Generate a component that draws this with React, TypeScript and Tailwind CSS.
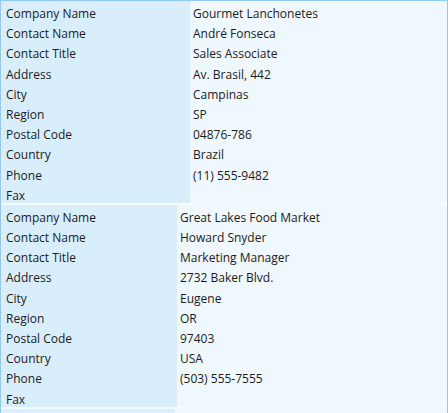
interface Customer {
  labelWidth: string;
  fields: [string, string][];
}

const customers: Customer[] = [
  {
    labelWidth: "grid-cols-[189px_1fr]",
    fields: [
      ["Company Name", "Gourmet Lanchonetes"],
      ["Contact Name", "André Fonseca"],
      ["Contact Title", "Sales Associate"],
      ["Address", "Av. Brasil, 442"],
      ["City", "Campinas"],
      ["Region", "SP"],
      ["Postal Code", "04876-786"],
      ["Country", "Brazil"],
      ["Phone", "(11) 555-9482"],
      ["Fax", ""],
    ],
  },
  {
    labelWidth: "grid-cols-[176px_1fr]",
    fields: [
      ["Company Name", "Great Lakes Food Market"],
      ["Contact Name", "Howard Snyder"],
      ["Contact Title", "Marketing Manager"],
      ["Address", "2732 Baker Blvd."],
      ["City", "Eugene"],
      ["Region", "OR"],
      ["Postal Code", "97403"],
      ["Country", "USA"],
      ["Phone", "(503) 555-7555"],
      ["Fax", ""],
    ],
  },
];

export default function App() {
  return (
    <div
      className="h-[413px] w-[448px] overflow-hidden border-x border-t border-[#92c9f0] bg-[#eff7ff] text-[12px] text-[#1b1b1b]"
      style={{ fontFamily: '"Open Sans", "Noto Sans", sans-serif' }}
    >
      {customers.map((c, i) => (
        <div key={i} className={`grid ${c.labelWidth} border-b-2 border-[#f6fbff]`}>
          {c.fields.map(([label, value]) => (
            <div key={label} className="contents">
              <div className="h-[20.2px] bg-[#d9eefd] pl-[5px] pt-[7px] leading-[12px]">{label}</div>
              <div className="h-[20.2px] pl-[3px] pt-[7px] leading-[12px]">{value}</div>
            </div>
          ))}
        </div>
      ))}

      {/* next record, cut off by the window */}
      <div className="grid grid-cols-[174px_1fr]">
        <div className="h-[20px] bg-[#d9eefd]" />
        <div className="h-[20px]" />
      </div>
    </div>
  );
}
